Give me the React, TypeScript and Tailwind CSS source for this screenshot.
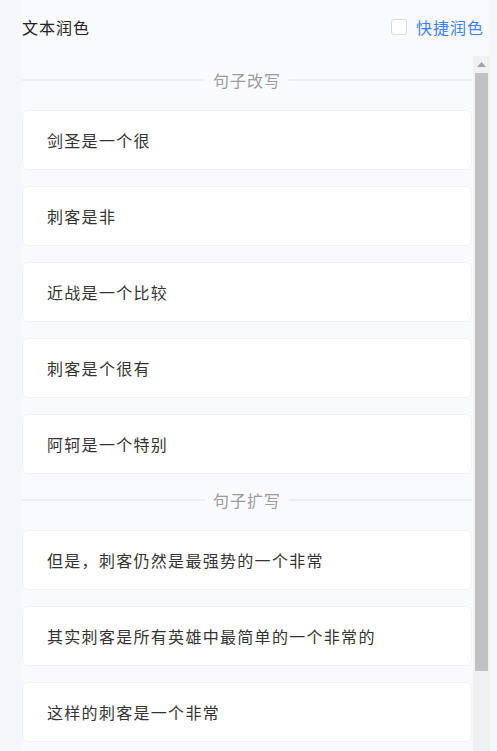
import React from "react";

const rewriteList = ["剑圣是一个很", "刺客是非", "近战是一个比较", "刺客是个很有", "阿轲是一个特别"];
const expandList = [
  "但是，刺客仍然是最强势的一个非常",
  "其实刺客是所有英雄中最简单的一个非常的",
  "这样的刺客是一个非常",
];

function Divider({ title }: { title: string }) {
  return (
    <div className="flex items-center gap-2 h-5 mb-5">
      <div className="flex-1 h-[2px] bg-[#eceef2]" />
      <span className="text-[16px] leading-5 tracking-[1px] text-[#9a9a9a]">{title}</span>
      <div className="flex-1 h-[2px] bg-[#eceef2]" />
    </div>
  );
}

function Card({ text }: { text: string }) {
  return (
    <div className="h-[60px] mb-4 flex items-center pl-6 bg-white rounded-md border border-[#f1f2f5] text-[16px] tracking-[1.3px] text-[#333333]">
      {text}
    </div>
  );
}

export default function App() {
  return (
    <div
      className="h-screen overflow-hidden bg-[#f6f7fa] pl-[21px] pr-[7px]"
      style={{ fontFamily: '"Noto Sans CJK SC", "Noto Sans", sans-serif' }}
    >
      <div className="h-full bg-[#f9fafd] flex flex-col">
        <div className="h-[56px] pt-[17px] flex items-start justify-between pl-px pr-[6px]">
          <span className="text-[16px] leading-5 tracking-[1px] text-[#222222]">文本润色</span>
          <label className="flex items-center gap-[9px]">
            <span className="w-4 h-4 rounded-[3px] border border-[#d9d9d9] bg-white" />
            <span className="text-[16px] leading-5 tracking-[1px] text-[#3d7fff]">快捷润色</span>
          </label>
        </div>
        <div className="flex flex-1 min-h-0">
          <div className="flex-1 overflow-hidden pt-[14px] pl-px pr-px">
            <Divider title="句子改写" />
            {rewriteList.map((t) => (
              <Card key={t} text={t} />
            ))}
            <Divider title="句子扩写" />
            {expandList.map((t) => (
              <Card key={t} text={t} />
            ))}
          </div>
          <div className="w-[17px] bg-[#f1f1f1] flex flex-col items-center">
            <div className="h-[17px] w-full flex items-center justify-center">
              <svg width="9" height="5" viewBox="0 0 9 5">
                <path d="M4.5 0 L9 5 L0 5 Z" fill="#a3a3a3" />
              </svg>
            </div>
            <div className="w-[13px] h-[598px] bg-[#c1c1c1]" />
          </div>
        </div>
      </div>
    </div>
  );
}
